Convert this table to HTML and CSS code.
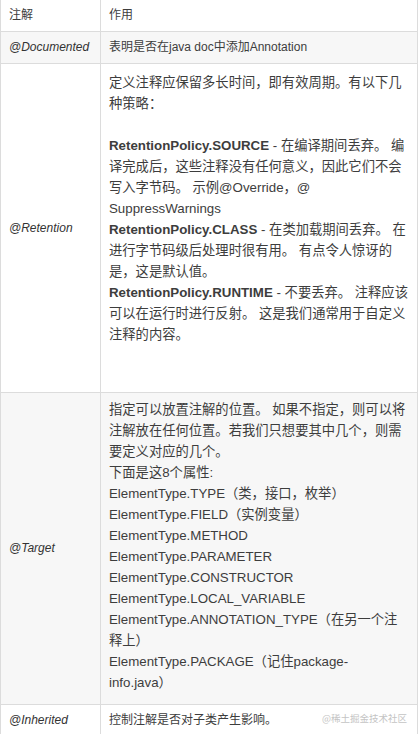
FILE: index.html
```html
<!DOCTYPE html>
<html lang="zh">
<head>
<meta charset="utf-8">
<link rel="stylesheet" href="styles.css">
</head>
<body>
<div class="wrap">
<table class="tbl">
  <colgroup><col class="c1"><col class="c2"></colgroup>
  <tr class="head">
    <td>注解</td>
    <td>作用</td>
  </tr>
  <tr class="alt">
    <td class="name">@Documented</td>
    <td>表明是否在java doc中添加Annotation</td>
  </tr>
  <tr>
    <td class="name">@Retention</td>
    <td class="desc desc-ret">定义注释应保留多长时间，即有效周期。有以下几<br>种策略：<br><br><b>RetentionPolicy.SOURCE</b> - 在编译期间丢弃。 编<br>译完成后，这些注释没有任何意义，因此它们不会<br>写入字节码。 示例@Override，@<br>SuppressWarnings<br><b>RetentionPolicy.CLASS</b> - 在类加载期间丢弃。 在<br>进行字节码级后处理时很有用。 有点令人惊讶的<br>是，这是默认值。<br><b>RetentionPolicy.RUNTIME</b> - 不要丢弃。 注释应该<br>可以在运行时进行反射。 这是我们通常用于自定义<br>注释的内容。</td>
  </tr>
  <tr class="alt">
    <td class="name">@Target</td>
    <td class="desc desc-tgt">指定可以放置注解的位置。 如果不指定，则可以将<br>注解放在任何位置。若我们只想要其中几个，则需<br>要定义对应的几个。<br>下面是这8个属性:<br>ElementType.TYPE（类，接口，枚举）<br>ElementType.FIELD（实例变量）<br>ElementType.METHOD<br>ElementType.PARAMETER<br>ElementType.CONSTRUCTOR<br>ElementType.LOCAL_VARIABLE<br>ElementType.ANNOTATION_TYPE（在另一个注<br>释上）<br>ElementType.PACKAGE（记住package-<br>info.java）</td>
  </tr>
  <tr>
    <td class="name">@Inherited</td>
    <td>控制注解是否对子类产生影响。</td>
  </tr>
</table>
<span class="mark">@稀土掘金技术社区</span>
</div>
</body>
</html>
```
FILE: styles.css
```css
html, body {
  margin: 0;
  padding: 0;
  background: #fff;
}
.wrap {
  position: relative;
  width: 419px;
  height: 734px;
  overflow: hidden;
}
.tbl {
  border-collapse: collapse;
  table-layout: fixed;
  width: 417px;
  font-family: "Liberation Sans", Arial, "Noto Sans CJK SC", sans-serif;
  font-size: 12px;
  line-height: 21px;
  color: #3d3d3d;
}
.c1 { width: 100px; }
.c2 { width: 317px; }
.tbl td {
  border: 1px solid #dcdcdc;
  padding: 5px 8px;
  vertical-align: middle;
  white-space: nowrap;
}
.tbl .head td {
  border-top: none;
}
.tbl .alt td {
  background: #f7f7f7;
}
.tbl .name {
  font-style: italic;
  color: #333;
}
.tbl .desc {
  font-size: 13.3px;
}
.tbl b {
  font-weight: bold;
}
.tbl .desc-ret {
  padding-top: 8px;
  padding-bottom: 47px;
}
.tbl .desc-tgt {
  padding-top: 6px;
  padding-bottom: 11px;
}
.mark {
  position: absolute;
  left: 322px;
  top: 711px;
  font-family: "Noto Sans CJK SC", "Liberation Sans", sans-serif;
  font-size: 9.5px;
  line-height: 14px;
  color: #c4c4c4;
}
```
